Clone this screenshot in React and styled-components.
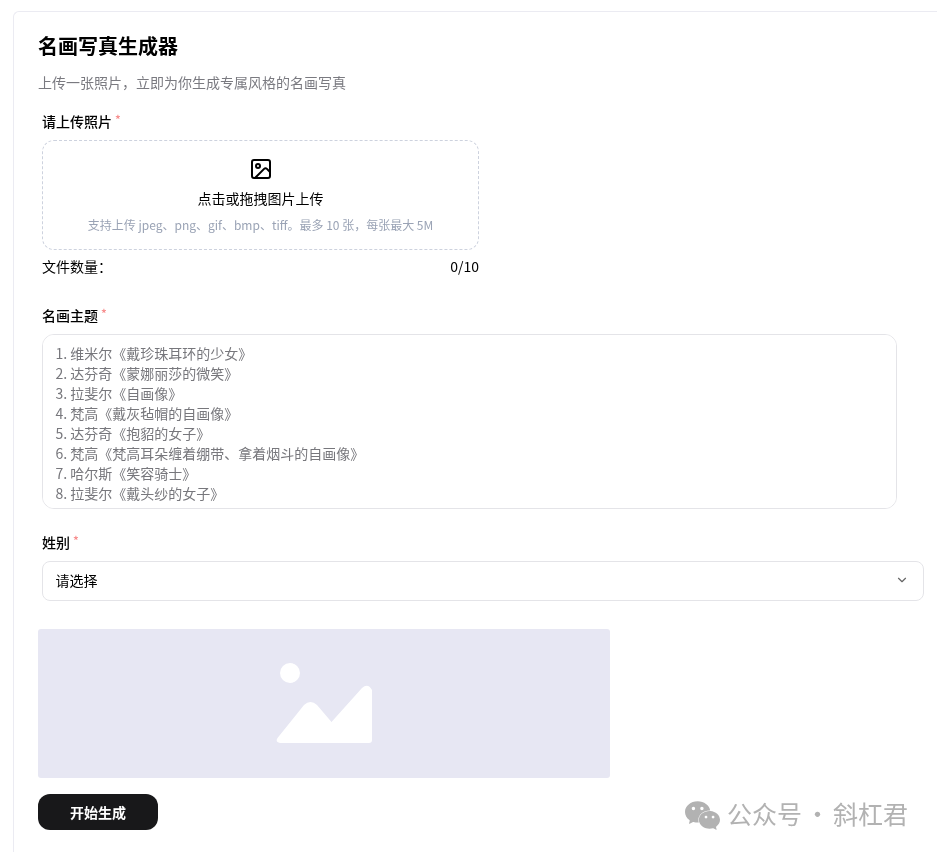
import React from 'react'
import styled, { createGlobalStyle } from 'styled-components';
import { ChevronDown, Image as ImageIcon } from 'lucide-react';
import { SiWechat } from 'react-icons/si';

const GlobalStyle = createGlobalStyle`
    html, body {
        margin: 0;
        height: 100%;
        overflow: hidden;
        background: #fff;
        font-family: "Noto Sans CJK SC", "Noto Sans", sans-serif;
        color: #000;
    }
    * { box-sizing: border-box; }
`;

const Card = styled.div`
    height: calc(100vh - 11px);
    margin: 11px 0 0 13px;
    padding: 19px 24px;
    border-top: 1px solid #ebebf2;
    border-left: 1px solid #ebebf2;
    border-top-left-radius: 6px;
    background: #fff;
`;

const Title = styled.h1`
    margin: 0;
    font-size: 20px;
    line-height: 30px;
    font-weight: 700;
`;

const Subtitle = styled.p`
    margin: 10px 0 0;
    font-size: 14px;
    line-height: 22px;
    color: #7a7a80;
`;

const Field = styled.div`
    margin-top: ${({ $top }) => $top}px;
    padding-left: 4px;
`;

const Label = styled.div`
    display: flex;
    height: 20px;
    margin-bottom: 8px;
    font-size: 14px;
    line-height: 19px;
    font-weight: 500;
`;

const Star = styled.span`
    margin: -1px 0 0 3px;
    font-size: 12px;
    line-height: 16px;
    color: #f78989;
`;

const Upload = styled.div`
    display: flex;
    flex-direction: column;
    align-items: center;
    width: 437px;
    height: 110px;
    padding-top: 16px;
    border: 1px dashed #cdd2de;
    border-radius: 12px;
`;

const UploadText = styled.div`
    margin-top: 6px;
    font-size: 14px;
    line-height: 22px;
`;

const UploadHint = styled.div`
    margin-top: 7px;
    font-size: 12px;
    line-height: 18px;
    color: #9aa3b5;
`;

const CountRow = styled.div`
    display: flex;
    justify-content: space-between;
    width: 437px;
    margin-top: 5px;
    font-size: 14px;
    line-height: 22px;
`;

const ThemeInput = styled.textarea`
    display: block;
    width: 855px;
    height: 175px;
    padding: 8px 12.5px;
    border: 1px solid #e4e4e8;
    border-radius: 12px;
    outline: none;
    resize: none;
    font-family: inherit;
    font-size: 14px;
    line-height: 20px;

    &::placeholder {
        color: #77777c;
        opacity: 1;
    }
`;

const Select = styled.div`
    display: flex;
    align-items: center;
    justify-content: space-between;
    width: 882px;
    height: 40px;
    padding: 0 14px 2px 12.5px;
    border: 1px solid #e4e4e8;
    border-radius: 8px;
    font-size: 14px;
`;

const Preview = styled.div`
    display: flex;
    align-items: center;
    justify-content: center;
    width: 572px;
    height: 149px;
    margin-top: 28px;
    border-radius: 3px;
    background: #e7e7f3;
`;

const SubmitButton = styled.button`
    display: block;
    width: 120px;
    height: 36px;
    margin-top: 16px;
    border: 0;
    border-radius: 12px;
    background: #18181a;
    color: #fff;
    font-family: inherit;
    font-size: 14px;
    font-weight: 700;
`;

const Watermark = styled.div`
    position: absolute;
    left: 685px;
    top: 797px;
    display: flex;
    align-items: center;
    gap: 7px;
    font-size: 25px;
    line-height: 32px;
    word-spacing: -2.6px;
    color: #b2b2b2;
    white-space: nowrap;
`;

const WatermarkText = styled.span`
    margin-bottom: 4px;
`;

const placeholder = [
  '1. 维米尔《戴珍珠耳环的少女》',
  '2. 达芬奇《蒙娜丽莎的微笑》',
  '3. 拉斐尔《自画像》',
  '4. 梵高《戴灰毡帽的自画像》',
  '5. 达芬奇《抱貂的女子》',
  '6. 梵高《梵高耳朵缠着绷带、拿着烟斗的自画像》',
  '7. 哈尔斯《笑容骑士》',
  '8. 拉斐尔《戴头纱的女子》',
].join('\n');

const MountainIcon = () => (
  <svg width="96" height="80" viewBox="0 0 96 80" style={{ marginTop: '-2px' }}>
    <circle cx="14" cy="10" r="10" fill="#fff" />
    <path
      d="M1.5 75 L28 42 Q34.5 36 41 42 L55.5 59 L86 25 Q92 19.5 96 27 L96 77 Q96 80 93 80 L4 80 Q-1 79 1.5 75 Z"
      fill="#fff"
    />
  </svg>
);

const App = () => {
  return (
    <>
      <GlobalStyle />
      <Card>
        <Title>名画写真生成器</Title>
        <Subtitle>上传一张照片，立即为你生成专属风格的名画写真</Subtitle>

        <Field $top={19}>
          <Label>请上传照片<Star>*</Star></Label>
          <Upload>
            <ImageIcon size={24} strokeWidth={2} color="#000" />
            <UploadText>点击或拖拽图片上传</UploadText>
            <UploadHint>支持上传 jpeg、png、gif、bmp、tiff。最多 10 张，每张最大 5M</UploadHint>
          </Upload>
          <CountRow>
            <span>文件数量：</span>
            <span>0/10</span>
          </CountRow>
        </Field>

        <Field $top={29}>
          <Label>名画主题<Star>*</Star></Label>
          <ThemeInput placeholder={placeholder} />
        </Field>

        <Field $top={24}>
          <Label>姓别<Star>*</Star></Label>
          <Select>
            <span>请选择</span>
            <ChevronDown size={14} color="#666" />
          </Select>
        </Field>

        <Preview>
          <MountainIcon />
        </Preview>
        <SubmitButton>开始生成</SubmitButton>
      </Card>
      <Watermark>
        <SiWechat size={35} />
        <WatermarkText>公众号 · 斜杠君</WatermarkText>
      </Watermark>
    </>
  );
};

export default App;
